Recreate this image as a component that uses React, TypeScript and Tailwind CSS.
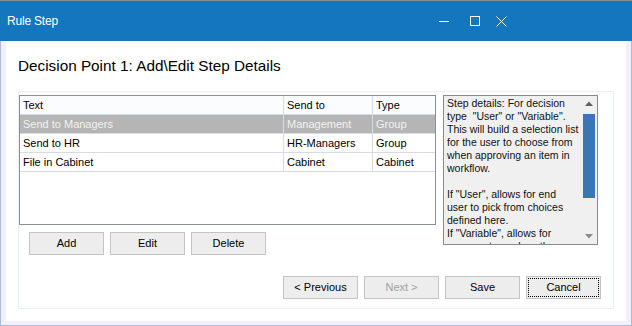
import React from "react";

const rows = [
  { text: "Send to Managers", sendTo: "Management", type: "Group", selected: true },
  { text: "Send to HR", sendTo: "HR-Managers", type: "Group", selected: false },
  { text: "File in Cabinet", sendTo: "Cabinet", type: "Cabinet", selected: false },
];

const details = `Step details: For decision
type  "User" or "Variable".
This will build a selection list
for the user to choose from
when approving an item in
workflow.

If "User", allows for end
user to pick from choices
defined here.
If "Variable", allows for
program to analyze the`;

function WinButton({ label, disabled, focused }: { label: string; disabled?: boolean; focused?: boolean }) {
  return (
    <button
      disabled={disabled}
      className={`relative w-[75px] h-[23px] bg-[#ededed] border border-[#c4c4c4] text-[11px] leading-none ${
        disabled ? "text-[#a0a0a0]" : "text-black"
      }`}
    >
      {focused && <span className="absolute inset-[1px] border border-dotted border-black" />}
      {label}
    </button>
  );
}

export default function App() {
  return (
    <div className="w-[632px] h-[326px] flex flex-col font-['Liberation_Sans',Arial,sans-serif] overflow-hidden">
      {/* Title bar */}
      <div className="h-px bg-[#8d8d8d]" />
      <div className="h-[40px] bg-[#1477bd] flex items-center text-white">
        <span className="pl-[7px] text-[12px] tracking-[-0.2px]">Rule Step</span>
        <div className="ml-auto flex items-center mr-[125px]">
          <svg width="10" height="10" viewBox="0 0 10 10" className="mr-[21px]">
            <path d="M0 5.5H10" stroke="white" strokeWidth="1" />
          </svg>
          <svg width="10" height="10" viewBox="0 0 10 10" className="mr-[16px]">
            <rect x="0.5" y="0.5" width="9" height="9" fill="none" stroke="white" strokeWidth="1" />
          </svg>
          <svg width="11" height="11" viewBox="0 0 11 11">
            <path d="M0.5 0.5L10.5 10.5M10.5 0.5L0.5 10.5" stroke="white" strokeWidth="1" />
          </svg>
        </div>
      </div>

      {/* Body */}
      <div className="flex-1 flex flex-col bg-[#f2f0fb] border-x border-b border-[#a9bce6] px-[5px] pb-[4px]">
        <div className="flex-1 bg-white pl-[12px]">
          <div className="h-[50px] flex items-center">
            <h1 className="text-[15.3px] text-black">Decision Point 1: Add\Edit Step Details</h1>
          </div>

          <div className="w-[596px] h-[218px] border border-[#e9f1f6] flex flex-col pt-[3px]">
            <div className="flex items-start">
              <div className="flex flex-col">
                {/* List */}
                <div className="w-[417px] h-[130px] border border-[#8a8f99] bg-white text-[11px]">
                  <div className="flex h-[19px] border-b border-[#d6dbe4] bg-[#fbfcfe] items-center">
                    <div className="w-[264px] pl-[3px] h-full flex items-center border-r border-[#d6dbe4]">Text</div>
                    <div className="w-[89px] pl-[3px] h-full flex items-center border-r border-[#d6dbe4]">Send to</div>
                    <div className="w-[62px] pl-[3px] h-full flex items-center">Type</div>
                  </div>
                  {rows.map((r) => (
                    <div
                      key={r.text}
                      className={`flex h-[19px] border-b border-[#d6dbe4] items-center ${
                        r.selected ? "bg-[#b5b5b5] text-[#f2f2f2]" : "text-black"
                      }`}
                    >
                      <div className="w-[264px] pl-[3px] h-full flex items-center border-r border-[#d6dbe4]">{r.text}</div>
                      <div className="w-[89px] pl-[3px] h-full flex items-center border-r border-[#d6dbe4]">{r.sendTo}</div>
                      <div className="w-[62px] pl-[3px] h-full flex items-center">{r.type}</div>
                    </div>
                  ))}
                </div>

                <div className="flex gap-[6px] pl-[10px] mt-[7px]">
                  <WinButton label="Add" />
                  <WinButton label="Edit" />
                  <WinButton label="Delete" />
                </div>
              </div>

              {/* Details box */}
              <div className="ml-[7px] w-[155px] h-[150px] border border-[#8a8a8a] bg-[#f0f0f0] flex overflow-hidden">
                <div className="flex-1 pl-[3px] pt-[1px] text-[10.5px] leading-[13px] text-[#111] whitespace-pre overflow-hidden">
                  {details}
                </div>
                <div className="w-[17px] flex flex-col items-center pt-[5px] pb-[5px]">
                  <svg width="8" height="5" viewBox="0 0 8 5">
                    <path d="M0 5L4 0.5L8 5Z" fill="#606060" />
                  </svg>
                  <div className="mt-[8px] w-[12px] h-[84px] bg-[#3a76b6]" />
                  <svg width="8" height="5" viewBox="0 0 8 5" className="mt-auto">
                    <path d="M0 0L8 0L4 4.5Z" fill="#8a8a8a" />
                  </svg>
                </div>
              </div>
            </div>

            <div className="flex gap-[6px] justify-end pr-[12px] mt-[21px]">
              <WinButton label="< Previous" />
              <WinButton label="Next >" disabled />
              <WinButton label="Save" />
              <WinButton label="Cancel" focused />
            </div>
          </div>
        </div>
      </div>
    </div>
  );
}
